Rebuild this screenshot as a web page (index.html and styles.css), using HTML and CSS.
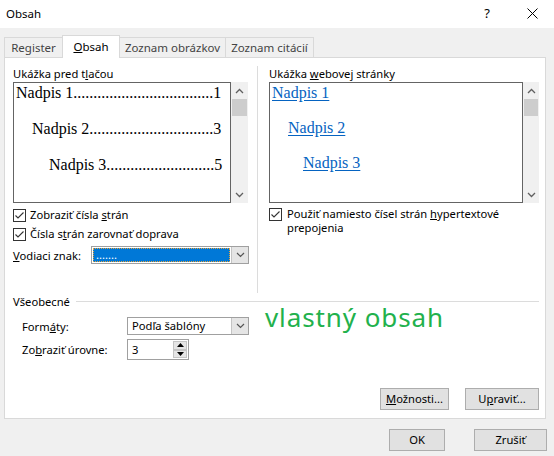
FILE: index.html
```html
<!DOCTYPE html>
<html lang="sk">
<head>
<meta charset="utf-8">
<title>Obsah</title>
<link rel="stylesheet" href="styles.css">
</head>
<body>
<div class="titlebar">
  <span class="title">Obsah</span>
  <span class="help">?</span>
  <span class="close"><svg width="11" height="11" viewBox="0 0 11 11"><path d="M0.5 0.5L10.5 10.5M10.5 0.5L0.5 10.5" stroke="#000" stroke-width="1" fill="none"/></svg></span>
</div>
<div class="tabs">
  <div class="tab t1">Register</div>
  <div class="tab t2 active"><u>O</u>bsah</div>
  <div class="tab t3">Zoznam obrázkov</div>
  <div class="tab t4">Zoznam citácií</div>
</div>
<div class="panel">
  <div class="top">
    <div class="col-left">
      <div class="label">Ukážka pred t<u>l</u>ačou</div>
      <div class="preview">
        <div class="box box-left">
          <div class="prow p1"><span class="ph">Nadpis 1</span><span class="dots">...................................</span><span>1</span></div>
          <div class="prow p2"><span class="ph">Nadpis 2</span><span class="dots">...............................</span><span>3</span></div>
          <div class="prow p3"><span class="ph">Nadpis 3</span><span class="dots">...........................</span><span>5</span></div>
        </div>
        <div class="scroll scroll-left">
          <div class="arr"><svg width="9" height="6" viewBox="0 0 9 6"><path d="M1 5L4.5 1.5L8 5" stroke="#606060" stroke-width="1.3" fill="none"/></svg></div>
          <div class="thumb"></div>
          <div class="fill"></div>
          <div class="arr"><svg width="9" height="6" viewBox="0 0 9 6"><path d="M1 1L4.5 4.5L8 1" stroke="#606060" stroke-width="1.3" fill="none"/></svg></div>
        </div>
      </div>
      <div class="chk c1"><span class="cb"><svg width="11" height="11" viewBox="0 0 11 11"><path d="M1.5 5.5L4 8L9.5 2.5" stroke="#333" stroke-width="1.1" fill="none"/></svg></span><span>Zobraziť čísla <u>s</u>trán</span></div>
      <div class="chk c2"><span class="cb"><svg width="11" height="11" viewBox="0 0 11 11"><path d="M1.5 5.5L4 8L9.5 2.5" stroke="#333" stroke-width="1.1" fill="none"/></svg></span><span>Čísla s<u>t</u>rán zarovnať doprava</span></div>
      <div class="lead-row">
        <span><u>V</u>odiaci znak:</span>
        <div class="combo combo-lead">
          <div class="val sel">.......</div>
          <div class="btn"><svg width="9" height="6" viewBox="0 0 9 6"><path d="M1 1L4.5 4.5L8 1" stroke="#555" stroke-width="1.2" fill="none"/></svg></div>
        </div>
      </div>
    </div>
    <div class="col-right">
      <div class="label">Ukážka <u>w</u>ebovej stránky</div>
      <div class="preview">
        <div class="box box-right">
          <div class="wrow w1"><span class="link">Nadpis 1</span></div>
          <div class="wrow w2"><span class="link">Nadpis 2</span></div>
          <div class="wrow w3"><span class="link">Nadpis 3</span></div>
        </div>
        <div class="scroll scroll-right">
          <div class="arr"><svg width="9" height="6" viewBox="0 0 9 6"><path d="M1 5L4.5 1.5L8 5" stroke="#606060" stroke-width="1.3" fill="none"/></svg></div>
          <div class="thumb"></div>
          <div class="fill"></div>
          <div class="arr"><svg width="9" height="6" viewBox="0 0 9 6"><path d="M1 1L4.5 4.5L8 1" stroke="#606060" stroke-width="1.3" fill="none"/></svg></div>
        </div>
      </div>
      <div class="chk chk-wrap"><span class="cb"><svg width="11" height="11" viewBox="0 0 11 11"><path d="M1.5 5.5L4 8L9.5 2.5" stroke="#333" stroke-width="1.1" fill="none"/></svg></span><span class="wrap-text">Použiť namiesto čísel strán <u>h</u>ypertextové prepojenia</span></div>
    </div>
  </div>
  <div class="group-head"><span>Všeobecné</span><span class="line"></span></div>
  <div class="frow">
    <span class="flabel">Form<u>á</u>ty:</span>
    <div class="combo combo-fmt">
      <div class="val">Podľa šablóny</div>
      <div class="btn"><svg width="9" height="6" viewBox="0 0 9 6"><path d="M1 1L4.5 4.5L8 1" stroke="#555" stroke-width="1.2" fill="none"/></svg></div>
    </div>
    <span class="custom">vlastný obsah</span>
  </div>
  <div class="srow">
    <span class="flabel">Zo<u>b</u>raziť úrovne:</span>
    <div class="spin">
      <div class="sval">3</div>
      <div class="sbtns">
        <div class="sb"><svg width="7" height="4" viewBox="0 0 7 4"><path d="M0 4L3.5 0L7 4Z" fill="#000"/></svg></div>
        <div class="sb"><svg width="7" height="4" viewBox="0 0 7 4"><path d="M0 0L3.5 4L7 0Z" fill="#000"/></svg></div>
      </div>
    </div>
  </div>
  <div class="actions">
    <div class="button b-opt"><u>M</u>ožnosti...</div>
    <div class="button b-mod">U<u>p</u>raviť...</div>
  </div>
</div>
<div class="footer">
  <div class="button b-ok">OK</div>
  <div class="button b-cancel">Zrušiť</div>
</div>
</body>
</html>
```

FILE: styles.css
```css
* { box-sizing: border-box; }
html, body { margin: 0; padding: 0; }
body {
  width: 554px;
  height: 456px;
  background: #f0f0f0;
  font-family: "Noto Sans", "Open Sans", sans-serif;
  font-size: 11.2px;
  color: #000;
  overflow: hidden;
}
u { text-decoration: underline; text-underline-offset: 1px; }

.titlebar {
  height: 28px;
  background: #fff;
  display: flex;
  align-items: center;
  padding-bottom: 2px;
}
.title { padding-left: 6px; flex: 1; font-size: 11.5px; }
.help { width: 46px; text-align: center; font-size: 13px; }
.close { width: 44px; display: flex; justify-content: center; }

.tabs {
  display: flex;
  align-items: flex-end;
  height: 23px;
  margin-top: 7px;
  margin-bottom: -1px;
  padding-left: 4px;
}
.tab {
  height: 20px;
  margin-bottom: 1px;
  line-height: 19px;
  border: 1px solid #d9d9d9;
  border-bottom: none;
  text-align: center;
  color: #444;
  background: #f0f0f0;
  margin-right: -1px;
  white-space: nowrap;
  font-size: 11.5px;
}
.tab.active {
  height: 23px;
  margin-bottom: 0;
  line-height: 22px;
  background: #fff;
  color: #000;
  position: relative;
  z-index: 1;
}
.t1 { width: 59px; }
.t2 { width: 58px; }
.t3 { width: 107px; }
.t4 { width: 89px; }

.panel {
  margin-left: 4px;
  width: 542px;
  height: 362px;
  background: #fff;
  border: 1px solid #d9d9d9;
  display: flex;
  flex-direction: column;
}
.top { display: flex; margin-top: 8px; height: 227px; }
.col-left { margin-left: 8px; width: 236px; }
.col-right {
  margin-left: 8px;
  border-left: 1px solid #dcdcdc;
  padding-left: 11px;
  width: 282px;
}
.label { height: 15px; line-height: 15px; white-space: nowrap; }

.preview { display: flex; height: 121px; margin-top: 1px; }
.box { border: 1px solid #646464; background: #fff; height: 121px; }
.box-left { width: 218px; }
.box-right { width: 254px; }
.scroll {
  background: #f0f0f0;
  display: flex;
  flex-direction: column;
  align-items: center;
  height: 121px;
}
.scroll-left { width: 17px; }
.scroll-right { width: 16px; }
.arr { height: 17px; display: flex; align-items: center; justify-content: center; }
.thumb { height: 17px; width: calc(100% - 2px); background: #cdcdcd; }
.fill { flex: 1; }

.prow {
  display: flex;
  font-family: "Liberation Serif", "Times New Roman", serif;
  font-size: 16px;
  line-height: 20px;
  height: 20px;
  padding-right: 9px;
  white-space: nowrap;
}
.prow + .prow { margin-top: 16px; }
.p1 { padding-left: 2px; }
.p2 { padding-left: 18px; }
.p3 { padding-left: 35px; }
.ph { flex: none; }
.dots { flex: 1; text-align: right; }

.wrow {
  font-family: "Liberation Serif", "Times New Roman", serif;
  font-size: 16px;
  line-height: 20px;
  height: 20px;
}
.wrow + .wrow { margin-top: 15px; }
.link { color: #0563c1; text-decoration: underline; text-underline-offset: 2px; }
.w1 { padding-left: 2px; }
.w2 { padding-left: 18px; }
.w3 { padding-left: 33px; }

.chk { display: flex; align-items: center; height: 16px; line-height: 16px; white-space: nowrap; }
.cb {
  width: 13px;
  height: 13px;
  border: 1px solid #333;
  background: #fff;
  margin-right: 4px;
  flex: none;
  display: flex;
}
.c1 { margin-top: 4px; }
.c2 { margin-top: 3px; }
.chk-wrap {
  margin-top: 4px;
  align-items: flex-start;
  height: auto;
  line-height: 14px;
  white-space: normal;
}
.chk-wrap .cb { margin-top: 1px; margin-right: 5px; }
.wrap-text { width: 225px; }

.lead-row { display: flex; align-items: center; height: 18px; margin-top: 4px; }
.combo { display: flex; height: 18px; border: 1px solid #a0a0a0; background: #fff; }
.combo-lead { margin-left: auto; width: 158px; }
.combo-fmt { width: 122px; }
.val { flex: 1; line-height: 16px; padding-left: 4px; white-space: nowrap; }
.val.sel {
  background: #0078d7;
  color: #fff;
  margin: 1px;
  border: 1px dotted #e8a33a;
  line-height: 12px;
  padding-left: 2px;
}
.btn {
  width: 17px;
  background: #e5e5e5;
  border-left: 1px solid #c4c4c4;
  display: flex;
  align-items: center;
  justify-content: center;
}

.group-head {
  display: flex;
  align-items: center;
  margin-top: 1px;
  height: 15px;
  line-height: 15px;
  padding-left: 8px;
  padding-right: 6px;
}
.group-head .line { flex: 1; height: 1px; background: #dcdcdc; margin-left: 6px; }

.frow { display: flex; align-items: center; height: 18px; margin-top: 8px; padding-left: 17px; }
.flabel { width: 105px; white-space: nowrap; }
.custom {
  align-self: flex-start;
  margin-top: -9px;
  margin-left: 16px;
  font-size: 26px;
  letter-spacing: 0.9px;
  line-height: 18px;
  height: 18px;
  color: #22b14c;
  white-space: nowrap;
}

.srow { display: flex; align-items: center; height: 21px; margin-top: 4px; padding-left: 17px; }
.spin { display: flex; width: 62px; height: 21px; border: 1px solid #a0a0a0; background: #fff; }
.sval { flex: 1; line-height: 19px; padding-left: 4px; }
.sbtns { width: 15px; display: flex; flex-direction: column; padding: 1px 1px 1px 0; }
.sb {
  flex: 1;
  background: #e5e5e5;
  border: 1px solid #c4c4c4;
  display: flex;
  align-items: center;
  justify-content: center;
}

.button {
  height: 22px;
  line-height: 20px;
  background: #e1e1e1;
  border: 1px solid #adadad;
  text-align: center;
  white-space: nowrap;
}
.actions {
  margin-top: auto;
  margin-bottom: 8px;
  display: flex;
  justify-content: flex-end;
  gap: 16px;
  padding-right: 6px;
}
.b-opt { width: 69px; }
.b-mod { width: 74px; }
.footer {
  display: flex;
  justify-content: flex-end;
  margin-top: 10px;
  gap: 29px;
  padding-right: 7px;
}
.b-ok { width: 56px; }
.b-cancel { width: 73px; }
```
